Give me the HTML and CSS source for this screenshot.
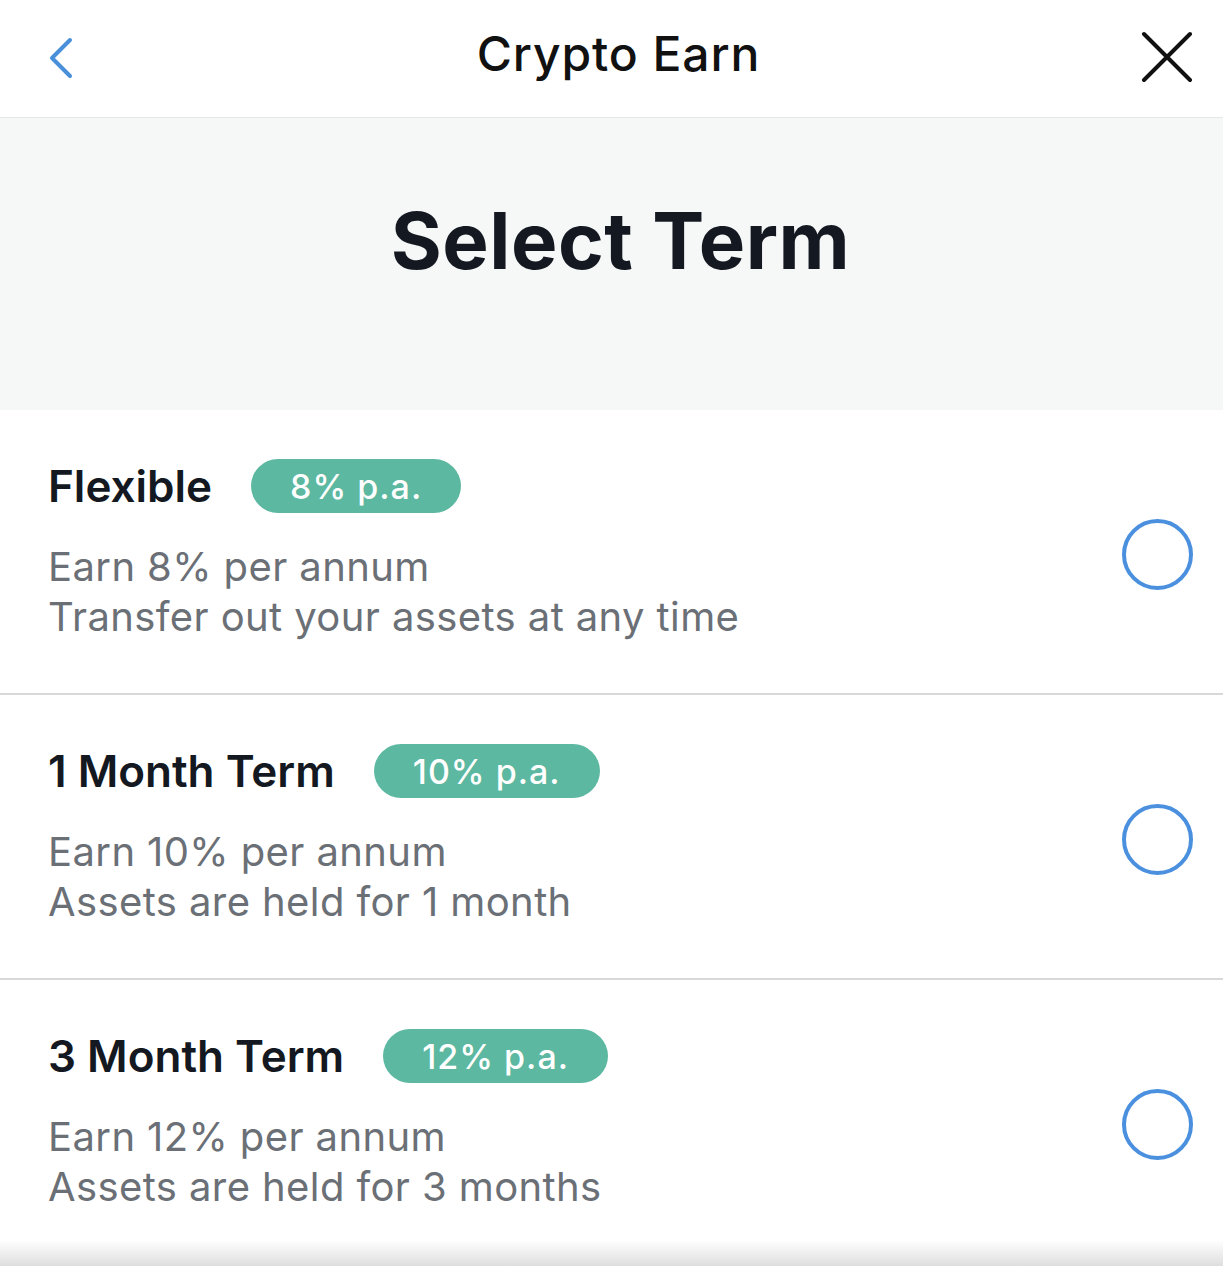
FILE: index.html
```html
<!DOCTYPE html>
<html lang="en">
<head>
<meta charset="utf-8">
<title>Crypto Earn</title>
<link rel="stylesheet" href="styles.css">
</head>
<body>
<div class="screen">
  <header class="topbar">
    <button class="icon-btn back" aria-label="Back">
      <svg width="26" height="42" viewBox="0 0 26 42"><path d="M22 3 L4 21 L22 39" fill="none" stroke="#4a8fd9" stroke-width="4" stroke-linecap="round" stroke-linejoin="round"/></svg>
    </button>
    <h1 class="topbar-title">Crypto Earn</h1>
    <button class="icon-btn close" aria-label="Close">
      <svg width="52" height="52" viewBox="0 0 52 52"><path d="M4 3 L50 49 M50 3 L4 49" fill="none" stroke="#111" stroke-width="4" stroke-linecap="round"/></svg>
    </button>
  </header>

  <section class="hero">
    <h2 class="hero-title">Select Term</h2>
  </section>

  <ul class="terms">
    <li class="term">
      <div class="term-body">
        <div class="term-head">
          <span class="term-name">Flexible</span>
          <span class="badge">8% p.a.</span>
        </div>
        <p class="term-desc">Earn 8% per annum<br>Transfer out your assets at any time</p>
      </div>
      <span class="radio"></span>
    </li>
    <li class="term">
      <div class="term-body">
        <div class="term-head">
          <span class="term-name">1 Month Term</span>
          <span class="badge">10% p.a.</span>
        </div>
        <p class="term-desc">Earn 10% per annum<br>Assets are held for 1 month</p>
      </div>
      <span class="radio"></span>
    </li>
    <li class="term last">
      <div class="term-body">
        <div class="term-head">
          <span class="term-name">3 Month Term</span>
          <span class="badge">12% p.a.</span>
        </div>
        <p class="term-desc">Earn 12% per annum<br>Assets are held for 3 months</p>
      </div>
      <span class="radio"></span>
    </li>
  </ul>
  <div class="bottom-shadow"></div>
</div>
</body>
</html>
```

FILE: styles.css
```css
* { box-sizing: border-box; }
html, body { margin: 0; padding: 0; background: #fff; }
body {
  font-family: Inter, "Noto Sans", "Liberation Sans", sans-serif;
  color: #141821;
}
.screen { width: 1223px; height: 1276px; overflow: hidden; background: #fff; }

.topbar {
  height: 118px;
  display: flex;
  align-items: center;
  justify-content: space-between;
  padding: 0 31px 10px 47px;
  border-bottom: 1px solid #e6e8e8;
}
.icon-btn {
  background: none; border: 0; padding: 0; margin: 0;
  display: flex; align-items: center; justify-content: center;
  cursor: pointer;
}
.back { width: 28px; height: 44px; margin-top: 8px; }
.close { width: 52px; height: 52px; margin-top: 6px; }
.topbar-title {
  margin: 0 0 0 22px;
  font-size: 48px;
  font-weight: 500;
  letter-spacing: 0.9px;
  color: #111;
}

.hero {
  height: 292px;
  background: #f6f7f7;
  display: flex;
  justify-content: center;
  padding: 84px 0 0 18px;
}
.hero-title {
  margin: 0;
  font-size: 78px;
  font-weight: 700;
  line-height: 1;
  color: #141821;
  letter-spacing: 0.5px;
}

.terms { list-style: none; margin: 0; padding: 0; }
.term {
  height: 285px;
  display: flex;
  align-items: flex-start;
  justify-content: space-between;
  padding: 48px 30px 0 48px;
  border-bottom: 2px solid #d8d8d8;
}
.term.last { border-bottom: 0; height: 260px; }
.term-head { display: flex; align-items: center; gap: 39px; height: 56px; }
.term-name {
  font-size: 44px;
  font-weight: 600;
  color: #141821;
}
.badge {
  display: inline-flex;
  align-items: center;
  height: 54px;
  padding: 0 39px;
  border-radius: 27px;
  background: #5cb8a0;
  color: #fff;
  font-size: 34px;
  font-weight: 500;
  letter-spacing: 1px;
}
.term-desc {
  margin: 28px 0 0;
  font-size: 40px;
  line-height: 50px;
  letter-spacing: 0.4px;
  color: #6b6f76;
  font-weight: 400;
}
.radio {
  width: 71px; height: 71px;
  border: 4px solid #4a90df;
  border-radius: 50%;
  margin-top: 61px;
  flex: none;
}
.bottom-shadow {
  height: 26px;
  background: linear-gradient(#fff, #dedede);
}
```
